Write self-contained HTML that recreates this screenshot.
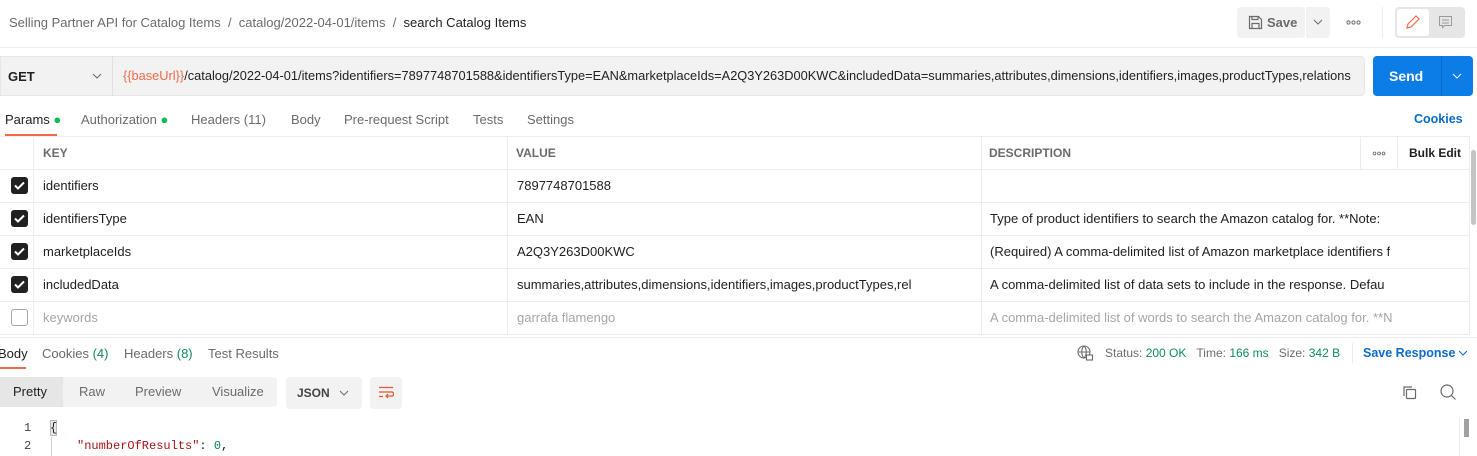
<!DOCTYPE html>
<html><head><style>
*{box-sizing:border-box;margin:0;padding:0}
body{width:1477px;height:456px;overflow:hidden;background:#fff;font-family:"Liberation Sans",Arial,sans-serif;font-size:13px;color:#212121;position:relative}
.a{position:absolute;white-space:nowrap}
.g{color:#6b6b6b}
.hl{position:absolute;background:#ededed;height:1px}
.vl{position:absolute;background:#ededed;width:1px}
.cb{position:absolute;left:11px;width:17px;height:17px;border-radius:3px;background:#212121}
.cb svg{position:absolute;left:2px;top:3px}
.cell{position:absolute;font-size:13px;white-space:nowrap;overflow:hidden}
</style></head><body>
<div class="a" style="left:9px;top:15px;font-size:13px"><span class="g">Selling Partner API for Catalog Items</span><span class="g">&nbsp; / &nbsp;catalog/2022-04-01/items&nbsp; / &nbsp;</span><span style="color:#212121">search Catalog Items</span></div>
<div class="a" style="left:1237px;top:7px;width:68px;height:31px;background:#f2f2f2;border-radius:4px"></div>
<svg class="a" style="left:1248px;top:15px" width="15" height="15" viewBox="0 0 15 15" fill="none" stroke="#6b6b6b" stroke-width="1.2"><path d="M1.5 1.5h9l3 3v9h-12z"/><path d="M4 1.5v3h6v-3M4 13.5v-5h7v5"/></svg>
<div class="a" style="left:1267px;top:15px;color:#6b6b6b;font-weight:bold">Save</div>
<div class="a" style="left:1306px;top:7px;width:24px;height:31px;background:#f2f2f2;border-radius:0 4px 4px 0"></div>
<svg class="a" style="left:1313px;top:19px" width="10" height="6"><path d="M1 1l4 4 4-4" fill="none" stroke="#6b6b6b"/></svg>
<svg class="a" style="left:1346px;top:20px" width="15" height="5" fill="none" stroke="#6b6b6b"><circle cx="2.5" cy="2.5" r="1.6"/><circle cx="7.5" cy="2.5" r="1.6"/><circle cx="12.5" cy="2.5" r="1.6"/></svg>
<div class="vl" style="left:1382px;top:7px;height:31px"></div>
<div class="a" style="left:1395px;top:7px;width:70px;height:31px;background:#e6e6e6;border-radius:4px"></div>
<div class="a" style="left:1397px;top:9px;width:32px;height:27px;background:#fff;border-radius:3px"></div>
<svg class="a" style="left:1405px;top:15px" width="15" height="15"><path d="M2 13l1-4 8-8 3 3-8 8z" fill="none" stroke="#f06a4a" stroke-width="1.2"/></svg>
<svg class="a" style="left:1438px;top:15px" width="15" height="15"><path d="M1.5 1.5h12v9h-7l-2 2v-2h-3z M4 5h7M4 8h7" fill="none" stroke="#9a9a9a"/></svg>
<div class="hl" style="left:0;top:47px;width:1477px"></div>
<div class="a" style="left:0;top:56px;width:1365px;height:40px;background:#f2f2f2;border-radius:0 4px 4px 0;border:1px solid #e6e6e6"></div>
<div class="vl" style="left:112px;top:56px;height:40px;background:#e0e0e0"></div>
<div class="a" style="left:8px;top:69px;font-weight:bold;font-size:13px">GET</div>
<svg class="a" style="left:92px;top:73px" width="10" height="6"><path d="M1 1l4 4 4-4" fill="none" stroke="#6b6b6b"/></svg>
<div class="a" style="left:123px;top:68px;font-size:12.8px;width:1235px;overflow:hidden"><span style="color:#f06a4a">{{baseUrl}}</span>/catalog/2022-04-01/items?identifiers=7897748701588&amp;identifiersType=EAN&amp;marketplaceIds=A2Q3Y263D00KWC&amp;includedData=summaries,attributes,dimensions,identifiers,images,productTypes,relations</div>
<div class="a" style="left:1373px;top:56px;width:100px;height:40px;background:#0c7ce6;border-radius:4px"></div>
<div class="vl" style="left:1441px;top:56px;height:40px;background:#0a6acc"></div>
<div class="a" style="left:1389px;top:68px;color:#fff;font-weight:bold;font-size:14px">Send</div>
<svg class="a" style="left:1452px;top:73px" width="10" height="6"><path d="M1 1l4 4 4-4" fill="none" stroke="#fff"/></svg>
<div class="a" style="left:5px;top:112px;color:#212121">Params <span style="color:#0cbb52">●</span></div>
<div class="a g" style="left:81px;top:112px">Authorization <span style="color:#0cbb52">●</span></div>
<div class="a g" style="left:191px;top:112px">Headers <span>(11)</span></div>
<div class="a g" style="left:291px;top:112px">Body</div>
<div class="a g" style="left:344px;top:112px">Pre-request Script</div>
<div class="a g" style="left:473px;top:112px">Tests</div>
<div class="a g" style="left:527px;top:112px">Settings</div>
<div class="a" style="left:1414px;top:112px;color:#0b6bcb;font-weight:bold;font-size:12.5px">Cookies</div>
<div class="a" style="left:5px;top:134px;width:52px;height:2px;background:#f06a4a"></div>
<div class="hl" style="left:0;top:136px;width:1470px"></div>
<div class="vl" style="left:33px;top:136px;height:198px"></div>
<div class="vl" style="left:507px;top:136px;height:198px"></div>
<div class="vl" style="left:981px;top:136px;height:198px"></div>
<div class="vl" style="left:1360px;top:136px;height:33px"></div>
<div class="vl" style="left:1397px;top:136px;height:33px"></div>
<div class="vl" style="left:1469px;top:136px;height:198px"></div>
<div class="a" style="left:43px;top:146px;font-weight:bold;color:#6b6b6b;font-size:12px">KEY</div>
<div class="a" style="left:516px;top:146px;font-weight:bold;color:#6b6b6b;font-size:12px">VALUE</div>
<div class="a" style="left:989px;top:146px;font-weight:bold;color:#6b6b6b;font-size:12px">DESCRIPTION</div>
<svg class="a" style="left:1372px;top:151px" width="14" height="5" fill="none" stroke="#6b6b6b" stroke-width="0.9"><circle cx="2.5" cy="2.5" r="1.4"/><circle cx="7" cy="2.5" r="1.4"/><circle cx="11.5" cy="2.5" r="1.4"/></svg>
<div class="a" style="left:1409px;top:146px;font-weight:bold;font-size:12px">Bulk Edit</div>
<div class="hl" style="left:0;top:169px;width:1470px"></div>
<div class="hl" style="left:0;top:202px;width:1470px"></div>
<div class="hl" style="left:0;top:235px;width:1470px"></div>
<div class="hl" style="left:0;top:268px;width:1470px"></div>
<div class="hl" style="left:0;top:301px;width:1470px"></div>
<div class="hl" style="left:0;top:334px;width:1470px"></div>
<div class="a" style="left:1471px;top:150px;width:5px;height:75px;background:#c4c4c4;border-radius:3px"></div>
<div class="cb" style="top:177px"><svg width="13" height="11"><path d="M2 5.5l3 3 6-6" fill="none" stroke="#fff" stroke-width="2"/></svg></div>
<div class="cell" style="left:43px;top:178px">identifiers</div>
<div class="cell" style="left:517px;top:178px">7897748701588</div>
<div class="cb" style="top:210px"><svg width="13" height="11"><path d="M2 5.5l3 3 6-6" fill="none" stroke="#fff" stroke-width="2"/></svg></div>
<div class="cell" style="left:43px;top:211px">identifiersType</div>
<div class="cell" style="left:517px;top:211px">EAN</div>
<div class="cell" style="left:990px;top:211px">Type of product identifiers to search the Amazon catalog for. **Note:</div>
<div class="cb" style="top:243px"><svg width="13" height="11"><path d="M2 5.5l3 3 6-6" fill="none" stroke="#fff" stroke-width="2"/></svg></div>
<div class="cell" style="left:43px;top:244px">marketplaceIds</div>
<div class="cell" style="left:517px;top:244px">A2Q3Y263D00KWC</div>
<div class="cell" style="left:990px;top:244px">(Required) A comma-delimited list of Amazon marketplace identifiers f</div>
<div class="cb" style="top:276px"><svg width="13" height="11"><path d="M2 5.5l3 3 6-6" fill="none" stroke="#fff" stroke-width="2"/></svg></div>
<div class="cell" style="left:43px;top:277px">includedData</div>
<div class="cell" style="left:517px;top:277px">summaries,attributes,dimensions,identifiers,images,productTypes,rel</div>
<div class="cell" style="left:990px;top:277px">A comma-delimited list of data sets to include in the response. Defau</div>
<div class="a" style="left:11px;top:309px;width:17px;height:17px;border:1px solid #a6a6a6;border-radius:3px"></div>
<div class="cell" style="left:43px;top:310px;color:#a6a6a6">keywords</div>
<div class="cell" style="left:517px;top:310px;color:#a6a6a6">garrafa flamengo</div>
<div class="cell" style="left:990px;top:310px;color:#a6a6a6">A comma-delimited list of words to search the Amazon catalog for. **N</div>
<div class="hl" style="left:0;top:337px;width:1477px"></div>
<div class="a" style="left:-2px;top:346px">Body</div>
<div class="a" style="left:0;top:367px;width:26px;height:2px;background:#f06a4a"></div>
<div class="a g" style="left:42px;top:346px">Cookies <span style="color:#0f8a5f">(4)</span></div>
<div class="a g" style="left:124px;top:346px">Headers <span style="color:#0f8a5f">(8)</span></div>
<div class="a g" style="left:208px;top:346px">Test Results</div>
<svg class="a" style="left:1077px;top:345px" width="17" height="16" fill="none" stroke="#6b6b6b" stroke-width="1.1"><circle cx="7" cy="7" r="6"/><path d="M1 7h12M7 1c-3 3-3 9 0 12M7 1c3 3 3 9 0 12"/><rect x="9.5" y="10" width="6" height="5" fill="#fff"/></svg>
<div class="a" style="left:1105px;top:346px;font-size:12px"><span class="g">Status:</span> <span style="color:#0f8a5f">200 OK</span>&nbsp;&nbsp;&nbsp;<span class="g">Time:</span> <span style="color:#0f8a5f">166 ms</span>&nbsp;&nbsp;&nbsp;<span class="g">Size:</span> <span style="color:#0f8a5f">342 B</span></div>
<div class="vl" style="left:1352px;top:343px;height:20px"></div>
<div class="a" style="left:1363px;top:346px;color:#0b6bcb;font-weight:bold;font-size:12.5px">Save Response</div>
<svg class="a" style="left:1458px;top:350px" width="10" height="6"><path d="M1 1l4 4 4-4" fill="none" stroke="#0b6bcb"/></svg>
<div class="a" style="left:0;top:377px;width:277px;height:30px;background:#f2f2f2;border-radius:0 4px 4px 0"></div>
<div class="a" style="left:0;top:377px;width:63px;height:30px;background:#e6e6e6"></div>
<div class="a" style="left:13px;top:384px">Pretty</div>
<div class="a g" style="left:79px;top:384px">Raw</div>
<div class="a g" style="left:135px;top:384px">Preview</div>
<div class="a g" style="left:212px;top:384px">Visualize</div>
<div class="a" style="left:286px;top:377px;width:76px;height:32px;background:#f2f2f2;border-radius:4px"></div>
<div class="a" style="left:297px;top:386px;font-weight:bold;font-size:12px;color:#444">JSON</div>
<svg class="a" style="left:339px;top:390px" width="10" height="6"><path d="M1 1l4 4 4-4" fill="none" stroke="#6b6b6b"/></svg>
<div class="a" style="left:370px;top:377px;width:32px;height:32px;background:#f2f2f2;border-radius:4px"></div>
<svg class="a" style="left:378px;top:386px" width="16" height="14" fill="none" stroke="#e05a30" stroke-width="1.2"><path d="M1 1.5h14M1 6h13c2 0 2 4 0 4h-6M10 8l-2 2 2 2M1 10.5h4"/></svg>
<svg class="a" style="left:1401px;top:385px" width="16" height="16" fill="none" stroke="#6b6b6b" stroke-width="1.2"><path d="M3 11V2h8"/><rect x="5.5" y="4.5" width="9" height="9" rx="1"/></svg>
<svg class="a" style="left:1440px;top:384px" width="17" height="17" fill="none" stroke="#6b6b6b" stroke-width="1.2"><circle cx="7" cy="7" r="6"/><path d="M11.5 11.5l4 4"/></svg>
<div class="a" style="left:24px;top:421px;font-family:'Liberation Mono',monospace;font-size:12px;color:#444">1</div>
<div class="a" style="left:24px;top:439px;font-family:'Liberation Mono',monospace;font-size:12px;color:#444">2</div>
<div class="a" style="left:50px;top:420px;width:7px;height:16px;background:#e8e8e8;border:1px solid #bbb"></div>
<div class="a" style="left:50px;top:421px;font-family:'Liberation Mono',monospace;font-size:12px">{</div>
<div class="vl" style="left:51px;top:437px;height:19px;background:#d0d0d0"></div>
<div class="a" style="left:77px;top:439px;font-family:'Liberation Mono',monospace;font-size:12px"><span style="color:#a31515">"numberOfResults"</span>: <span style="color:#098658">0</span>,</div>
<div class="vl" style="left:1459px;top:418px;height:38px"></div>
<div class="a" style="left:1464px;top:419px;width:5px;height:18px;background:#a0a0a0"></div>
</body></html>
